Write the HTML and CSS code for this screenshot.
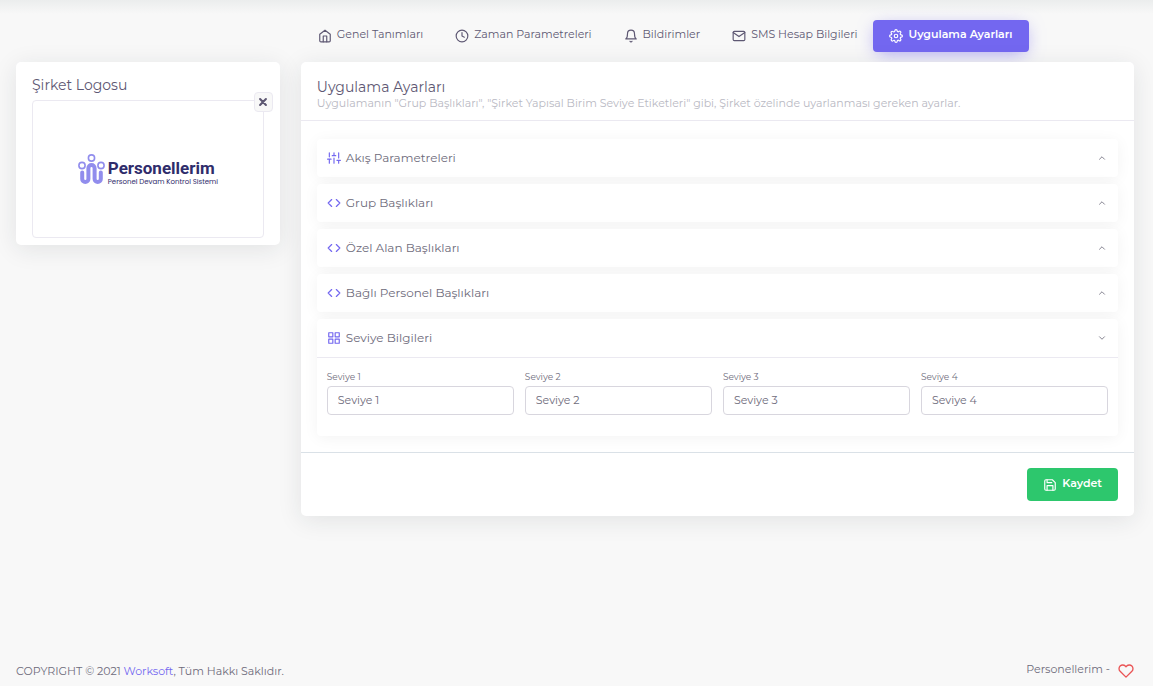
FILE: index.html
```html
<!DOCTYPE html>
<html lang="tr">
<head>
<meta charset="utf-8">
<meta name="viewport" content="width=device-width, initial-scale=1">
<title>Uygulama Ayarları</title>
<link rel="stylesheet" href="styles.css">
</head>
<body>
<svg class="sprite" aria-hidden="true">
  <symbol id="home" viewBox="0 0 24 24"><path d="M3 9l9-7 9 7v11a2 2 0 0 1-2 2H5a2 2 0 0 1-2-2z"/><path d="M9 22V12h6v10"/></symbol>
  <symbol id="clock" viewBox="0 0 24 24"><circle cx="12" cy="12" r="10"/><path d="M12 6v6l4 2"/></symbol>
  <symbol id="bell" viewBox="0 0 24 24"><path d="M18 8A6 6 0 0 0 6 8c0 7-3 9-3 9h18s-3-2-3-9"/><path d="M13.73 21a2 2 0 0 1-3.46 0"/></symbol>
  <symbol id="mail" viewBox="0 0 24 24"><path d="M4 4h16a2 2 0 0 1 2 2v12a2 2 0 0 1-2 2H4a2 2 0 0 1-2-2V6a2 2 0 0 1 2-2z"/><path d="M22 6l-10 7L2 6"/></symbol>
  <symbol id="settings" viewBox="0 0 24 24"><circle cx="12" cy="12" r="3"/><path d="M19.4 15a1.65 1.65 0 0 0 .33 1.82l.06.06a2 2 0 0 1-2.83 2.83l-.06-.06a1.65 1.65 0 0 0-2.8 1.18V21a2 2 0 0 1-4 0v-.09a1.65 1.65 0 0 0-2.9-1.08l-.06.06a2 2 0 0 1-2.83-2.83l.06-.06a1.65 1.65 0 0 0-1.18-2.8H3a2 2 0 0 1 0-4h.09a1.65 1.65 0 0 0 1.08-2.9l-.06-.06a2 2 0 0 1 2.83-2.83l.06.06a1.65 1.65 0 0 0 1.82.33H9a1.65 1.65 0 0 0 1-1.51V3a2 2 0 0 1 4 0v.09a1.65 1.65 0 0 0 2.82 1.18l.06-.06a2 2 0 0 1 2.83 2.83l-.06.06a1.65 1.65 0 0 0-.33 1.82V9a1.65 1.65 0 0 0 1.51 1H21a2 2 0 0 1 0 4h-.09a1.65 1.65 0 0 0-1.51 1z"/></symbol>
  <symbol id="sliders" viewBox="0 0 24 24"><path d="M4 21v-7M4 10V3M12 21v-9M12 8V3M20 21v-5M20 12V3M1 14h6M9 8h6M17 16h6"/></symbol>
  <symbol id="code" viewBox="0 0 24 24"><path d="M16 18l6-6-6-6M8 6l-6 6 6 6"/></symbol>
  <symbol id="grid" viewBox="0 0 24 24"><path d="M3 3h7v7H3zM14 3h7v7h-7zM14 14h7v7h-7zM3 14h7v7H3z"/></symbol>
  <symbol id="up" viewBox="0 0 24 24"><path d="M18 15l-6-6-6 6"/></symbol>
  <symbol id="down" viewBox="0 0 24 24"><path d="M6 9l6 6 6-6"/></symbol>
  <symbol id="save" viewBox="0 0 24 24"><path d="M19 21H5a2 2 0 0 1-2-2V5a2 2 0 0 1 2-2h11l5 5v11a2 2 0 0 1-2 2z"/><path d="M17 21v-8H7v8M7 3v5h8"/></symbol>
  <symbol id="heart" viewBox="0 0 24 24"><path d="M20.84 4.61a5.5 5.5 0 0 0-7.78 0L12 5.67l-1.06-1.06a5.5 5.5 0 0 0-7.78 7.78L12 21.23l8.84-8.84a5.5 5.5 0 0 0 0-7.78z"/></symbol>
  <symbol id="close" viewBox="0 0 24 24"><path d="M5 5l14 14M19 5L5 19"/></symbol>
</svg>

<div class="layout">
  <nav class="tabs" aria-label="Ayarlar">
    <a class="tab" href="#"><svg class="icon"><use href="#home"/></svg><span>Genel Tanımları</span></a>
    <a class="tab" href="#"><svg class="icon"><use href="#clock"/></svg><span>Zaman Parametreleri</span></a>
    <a class="tab" href="#"><svg class="icon"><use href="#bell"/></svg><span>Bildirimler</span></a>
    <a class="tab" href="#"><svg class="icon"><use href="#mail"/></svg><span>SMS Hesap Bilgileri</span></a>
    <a class="tab tab-active" href="#" aria-current="page"><svg class="icon"><use href="#settings"/></svg><span>Uygulama Ayarları</span></a>
  </nav>

  <aside class="card logo-card">
    <h2 class="title">Şirket Logosu</h2>
    <div class="logo-frame">
      <button class="remove" type="button" aria-label="Logoyu kaldır"><svg class="icon-close"><use href="#close"/></svg></button>
      <div class="brand">
        <svg class="brand-mark" viewBox="0 0 27 31">
          <g fill="none" stroke="#918ded">
            <circle cx="13.5" cy="4" r="3.1" stroke-width="1.6"/>
            <circle cx="4" cy="11.5" r="3.1" stroke-width="1.6"/>
            <circle cx="23" cy="11.5" r="3.1" stroke-width="1.6"/>
            <path d="M4.200 18.500v6.500a3.100 3.100 0 0 0 6.200 0V14.200a3.100 3.100 0 0 1 6.200 0V25a3.100 3.100 0 0 0 6.200 0v-6.500" stroke-width="4" stroke-linecap="round"/>
          </g>
        </svg>
        <div class="brand-text">
          <span class="brand-name">Personellerim</span>
          <span class="brand-tag">Personel Devam Kontrol Sistemi</span>
        </div>
      </div>
    </div>
  </aside>

  <main>
    <form class="card">
      <header class="card-head">
        <h1 class="title">Uygulama Ayarları</h1>
        <p class="subtitle">Uygulamanın "Grup Başlıkları", "Şirket Yapısal Birim Seviye Etiketleri" gibi, Şirket özelinde uyarlanması gereken ayarlar.</p>
      </header>
      <div class="accordion">
        <section class="panel"><button class="panel-head" type="button" aria-expanded="false"><svg class="icon accent"><use href="#sliders"/></svg><span>Akış Parametreleri</span><svg class="chevron"><use href="#up"/></svg></button></section>
        <section class="panel"><button class="panel-head" type="button" aria-expanded="false"><svg class="icon accent"><use href="#code"/></svg><span>Grup Başlıkları</span><svg class="chevron"><use href="#up"/></svg></button></section>
        <section class="panel"><button class="panel-head" type="button" aria-expanded="false"><svg class="icon accent"><use href="#code"/></svg><span>Özel Alan Başlıkları</span><svg class="chevron"><use href="#up"/></svg></button></section>
        <section class="panel"><button class="panel-head" type="button" aria-expanded="false"><svg class="icon accent"><use href="#code"/></svg><span>Bağlı Personel Başlıkları</span><svg class="chevron"><use href="#up"/></svg></button></section>
        <section class="panel">
          <button class="panel-head" type="button" aria-expanded="true"><svg class="icon accent"><use href="#grid"/></svg><span>Seviye Bilgileri</span><svg class="chevron"><use href="#down"/></svg></button>
          <div class="levels">
            <div class="field"><label for="level1">Seviye 1</label><input id="level1" type="text" value="Seviye 1"></div>
            <div class="field"><label for="level2">Seviye 2</label><input id="level2" type="text" value="Seviye 2"></div>
            <div class="field"><label for="level3">Seviye 3</label><input id="level3" type="text" value="Seviye 3"></div>
            <div class="field"><label for="level4">Seviye 4</label><input id="level4" type="text" value="Seviye 4"></div>
          </div>
        </section>
      </div>
      <footer class="card-foot">
        <button class="save" type="button"><svg class="icon"><use href="#save"/></svg><span>Kaydet</span></button>
      </footer>
    </form>
  </main>
</div>

<footer class="page-foot">
  <p>COPYRIGHT © 2021 <a href="#">Worksoft</a>, Tüm Hakkı Saklıdır.</p>
  <p class="made"><span>Personellerim -</span><svg class="heart"><use href="#heart"/></svg></p>
</footer>
</body>
</html>
```
FILE: styles.css
```css
* {
  box-sizing: border-box;
}

body {
  display: flex;
  flex-direction: column;
  min-height: 100vh;
  margin: 0;
  background: linear-gradient(#ebeded, #f8f8f8 14px);
  color: #6e6b7b;
  font: 400 11px/16px Montserrat, Inter, sans-serif;
}

h1, h2, p {
  margin: 0;
}

a {
  color: #7367f0;
  text-decoration: none;
}

button, input {
  font: inherit;
  color: inherit;
}

svg {
  flex: none;
  fill: none;
  stroke: currentColor;
  stroke-width: 2;
  stroke-linecap: round;
  stroke-linejoin: round;
}

.sprite {
  position: absolute;
  width: 0;
  height: 0;
}

.icon {
  width: 14px;
  height: 14px;
}

.accent {
  color: #7367f0;
}

.layout {
  display: grid;
  grid-template-columns: 19fr 60fr;
  align-items: start;
  gap: 10px 21px;
  padding: 20px 19px 20px 16px;
}

.tabs {
  grid-column: 2;
  display: flex;
  padding-left: 1px;
}

.tab {
  display: flex;
  align-items: center;
  gap: 5px;
  height: 32px;
  padding: 0 16px;
  border-radius: 4px;
  color: #5e5873;
  white-space: nowrap;
}

.tab span {
  padding-bottom: 4px;
}

.tab-active {
  background: #7367f0;
  color: #fff;
  font-weight: 600;
  box-shadow: 0 4px 18px -4px rgba(115, 103, 240, 0.65);
}

.card {
  background: #fff;
  border-radius: 5px;
  box-shadow: 0 4px 24px rgba(34, 41, 47, 0.1);
}

.title {
  color: #5e5873;
  font-size: 14px;
  font-weight: 400;
  line-height: 18px;
}

.logo-card {
  padding: 14px 16px 7px;
}

.logo-frame {
  position: relative;
  display: flex;
  align-items: center;
  justify-content: center;
  height: 138px;
  margin-top: 6px;
  border: 1px solid #ebe9f1;
  border-radius: 4px;
}

.remove {
  position: absolute;
  top: -9px;
  right: -10px;
  display: flex;
  align-items: center;
  justify-content: center;
  width: 19px;
  height: 20px;
  padding: 0;
  border: 1px solid #ebe9f1;
  border-radius: 4px;
  background: #f8f8f8;
  color: #5e5873;
}

.icon-close {
  width: 10px;
  height: 10px;
  stroke-width: 5;
}

.brand {
  display: flex;
  align-items: flex-end;
  gap: 3px;
  color: #2f2c6b;
}

.brand-mark {
  width: 27px;
  height: 31px;
}

.brand-text {
  display: flex;
  flex-direction: column;
}

.brand-name {
  font: 700 17px/20px Roboto, sans-serif;
}

.brand-tag {
  font: 400 7px/7px Poppins, Montserrat, sans-serif;
}

.card-head {
  padding: 16px 16px 10px;
  border-bottom: 1px solid #ebe9f1;
}

.subtitle {
  color: #b9b9c3;
  line-height: 14px;
}

.accordion {
  display: grid;
  gap: 7px;
  padding: 18px 16px 16px;
}

.panel {
  background: #fff;
  border-radius: 4px;
  box-shadow: 0 2px 15px rgba(0, 0, 0, 0.05);
}

.panel-head {
  display: flex;
  align-items: center;
  gap: 5px;
  width: 100%;
  height: 38px;
  padding: 0 11px 1px 10px;
  border: 0;
  background: none;
  font-size: 12px;
  text-align: left;
}

.chevron {
  width: 10px;
  height: 10px;
  margin-left: auto;
}

.levels {
  display: grid;
  grid-template-columns: repeat(4, 1fr);
  gap: 11px;
  padding: 13px 10px 21px;
  border-top: 1px solid #ebe9f1;
}

.field {
  display: grid;
  gap: 3px;
}

.field label {
  font-size: 9px;
  line-height: 12px;
}

.field input {
  width: 100%;
  min-width: 0;
  height: 29px;
  padding: 0 10px 1px;
  border: 1px solid #d8d6de;
  border-radius: 4px;
  background: #fff;
}

.card-foot {
  display: flex;
  justify-content: flex-end;
  padding: 15px 16px;
  border-top: 1px solid #dae1e7;
}

.save {
  display: flex;
  align-items: center;
  gap: 5px;
  height: 33px;
  padding: 0 16px;
  border: 0;
  border-radius: 4px;
  background: #2dc76d;
  color: #fff;
  font-weight: 600;
}

.save span {
  padding-bottom: 3px;
}

.page-foot {
  display: flex;
  justify-content: space-between;
  align-items: center;
  margin-top: auto;
  padding: 0 19px 5px 16px;
}

.made {
  display: flex;
  align-items: center;
  gap: 8px;
}

.made span {
  padding-bottom: 4px;
}

.heart {
  width: 16px;
  height: 16px;
  color: #ea5455;
}
```
